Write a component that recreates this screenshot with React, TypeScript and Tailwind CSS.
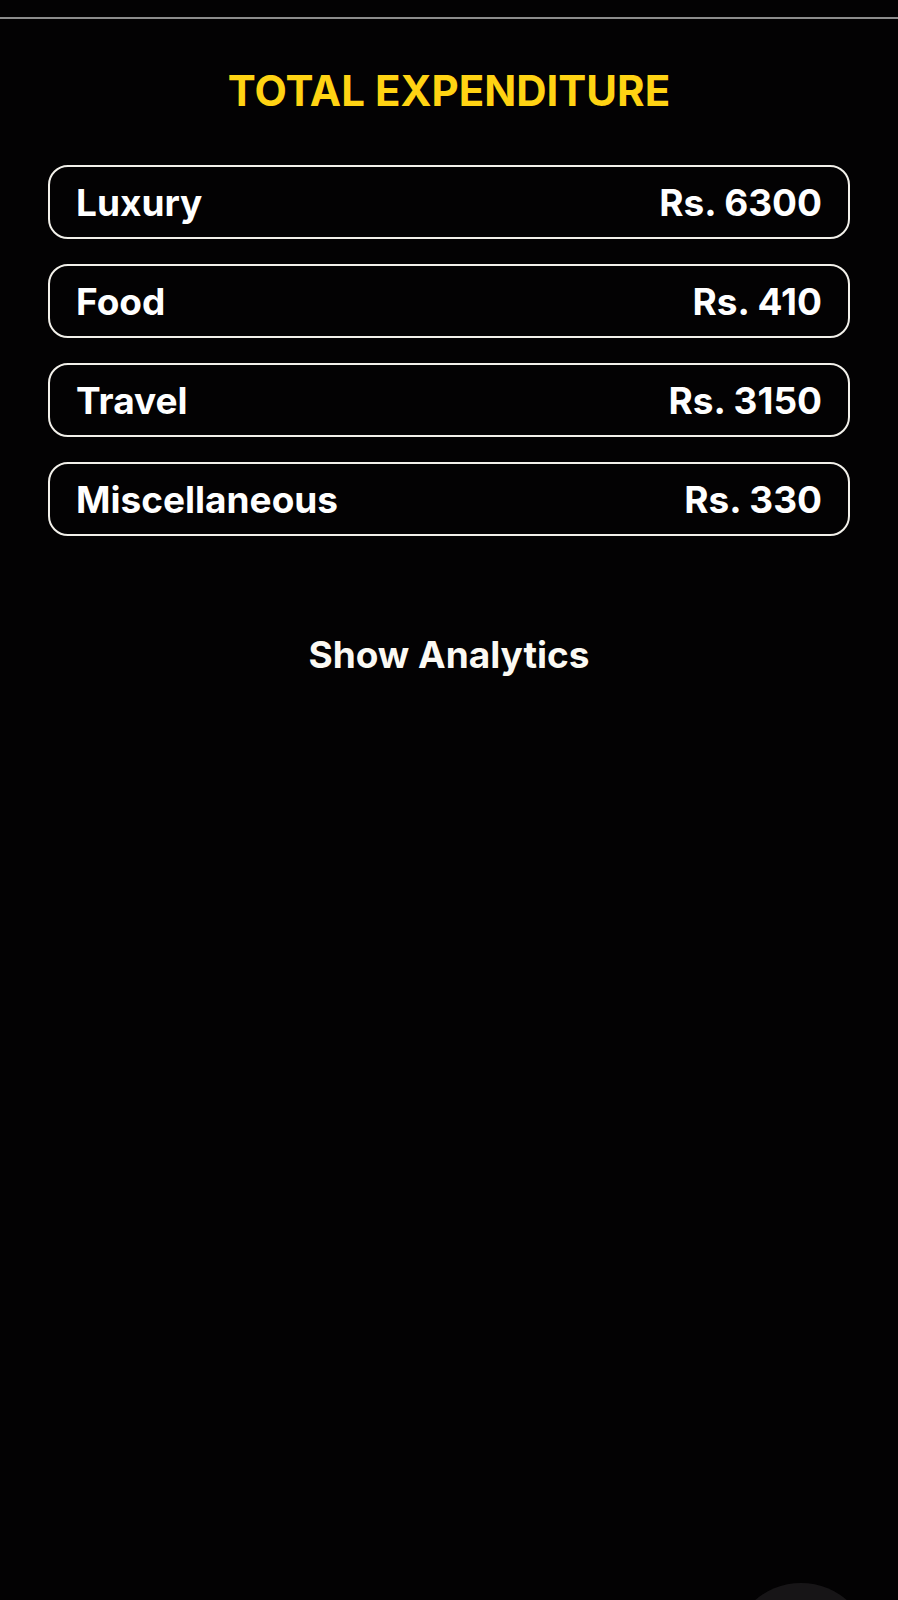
const rows = [
  { label: 'Luxury', amount: 'Rs. 6300' },
  { label: 'Food', amount: 'Rs. 410' },
  { label: 'Travel', amount: 'Rs. 3150' },
  { label: 'Miscellaneous', amount: 'Rs. 330' },
]

export default function App() {
  return (
    <div
      className="relative min-h-[1600px] w-full overflow-hidden bg-[#030203] text-white"
      style={{ fontFamily: 'Inter, "Liberation Sans", sans-serif' }}
    >
      {/* top divider */}
      <div className="pt-[17px]">
        <div className="h-[2px] bg-[#8c8c8c]" />
      </div>

      {/* title */}
      <h1 className="mt-[51px] text-center text-[42px] font-bold leading-none text-[#ffd313]">
        TOTAL EXPENDITURE
      </h1>

      {/* expenditure list */}
      <div className="mt-[53px] flex flex-col gap-[25px] px-[48px]">
        {rows.map((r) => (
          <div
            key={r.label}
            className="flex h-[74px] items-center justify-between rounded-[20px] border-2 border-[#f2f0ea] px-[26px]"
          >
            <span className="text-[37px] font-bold leading-none">{r.label}</span>
            <span className="text-[37px] font-bold leading-none">{r.amount}</span>
          </div>
        ))}
      </div>

      {/* action */}
      <div className="mt-[100px] flex justify-center">
        <button className="text-[37px] font-bold leading-none text-[#fbf9f3]">Show Analytics</button>
      </div>

      {/* floating button peeking from bottom */}
      <div className="absolute left-[731px] top-[1583px] h-[140px] w-[140px] rounded-full bg-[#171517]" />
    </div>
  )
}
